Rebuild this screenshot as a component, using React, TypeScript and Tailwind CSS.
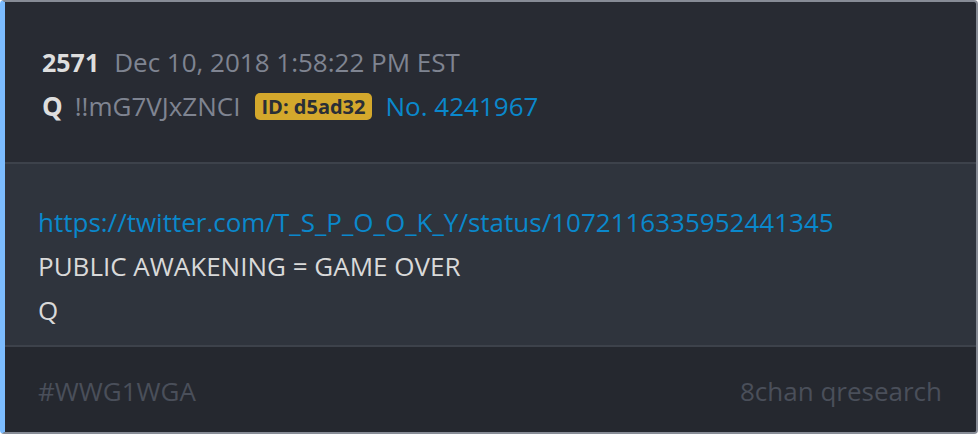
export default function App() {
  return (
    <div className="w-[978px] h-[434px] bg-white font-['Open_Sans',sans-serif]">
      <div className="h-full flex flex-col rounded-[4px] overflow-hidden border-2 border-l-[5px] border-[#878c96] border-l-[#7cbcff] bg-[#282b33]">
        <div className="h-[160px] flex flex-col gap-[8px] pl-[37px] pt-[42px]">
          <div className="flex items-baseline gap-[15px] text-[26px] leading-[36px]">
            <span className="font-bold text-[25px] text-[#dedede]">2571</span>
            <span className="text-[#7f8491]">Dec 10, 2018 1:58:22 PM EST</span>
          </div>
          <div className="flex items-center gap-[15px] text-[26px] leading-[36px]">
            <span className="-mr-[3px] font-bold text-[#dedede]">Q</span>
            <span className="text-[#7f8491]">!!mG7VJxZNCI</span>
            <span className="rounded-[5px] bg-[#d4a82c] px-[6px] text-[20px] leading-[27px] font-bold text-[#2a2e36]">ID: d5ad32</span>
            <span className="-ml-[1px] text-[#0a88cc]">No. 4241967</span>
          </div>
        </div>
        <div className="h-[2px] bg-[#3d424b]" />
        <div className="h-[181px] bg-[#2f343d] flex flex-col pt-[36px] pl-[33px] text-[26px] leading-[44px] text-[#d9d9d9]">
          <a className="text-[#0a88cc]">https://twitter.com/T_S_P_O_O_K_Y/status/1072116335952441345</a>
          <p>PUBLIC AWAKENING = GAME OVER</p>
          <p>Q</p>
        </div>
        <div className="h-[2px] bg-[#3d424b]" />
        <div className="flex-1 bg-[#25282f] flex items-center justify-between pt-[4px] pl-[33px] pr-[34px] text-[26px] text-[#4a4f5a]">
          <span>#WWG1WGA</span>
          <span>8chan qresearch</span>
        </div>
      </div>
    </div>
  );
}
